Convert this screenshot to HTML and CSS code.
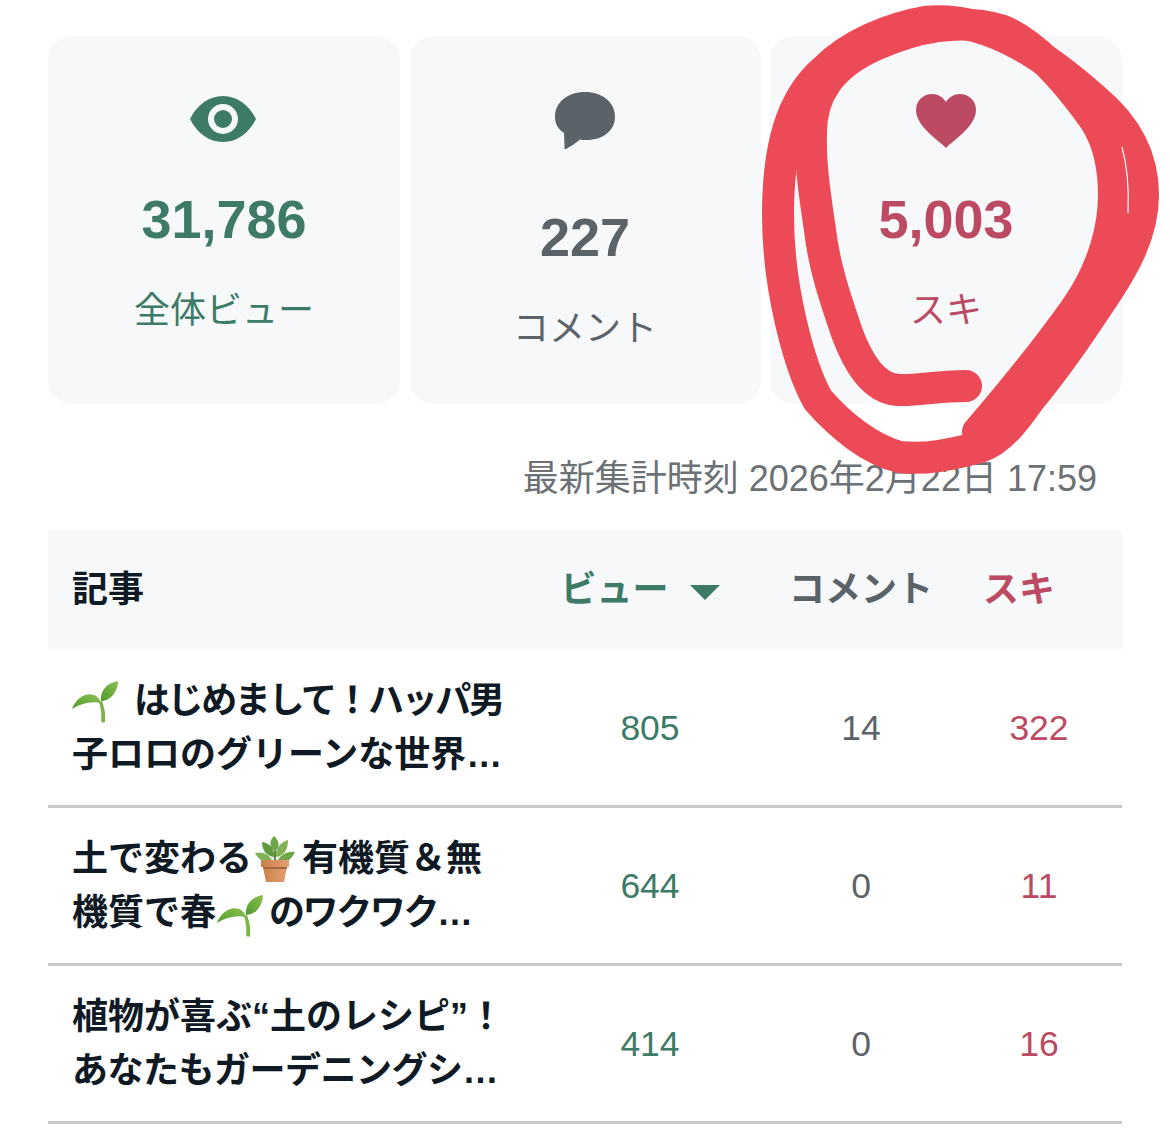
FILE: index.html
```html
<!DOCTYPE html>
<html lang="ja">
<head>
	<meta charset="utf-8">
	<title>ダッシュボード</title>
	<link rel="stylesheet" href="styles.css">
</head>

<body>
	<svg width="0" height="0" class="defs">
		<defs>
			<linearGradient id="leafGrad" x1="0" y1="1" x2="1" y2="0">
				<stop offset="0" stop-color="#4f9a2a"/>
				<stop offset="1" stop-color="#8cc152"/>
			</linearGradient>
			<linearGradient id="potGrad" x1="0" y1="0" x2="1" y2="0">
				<stop offset="0" stop-color="#c97f4c"/>
				<stop offset="1" stop-color="#e5a070"/>
			</linearGradient>
			<symbol id="seedling" viewBox="0 0 46 42">
				<path d="M33 41 C34 32 32 26 30 20 L27 21 C29 28 30 34 29 40 C30 42 32 42 33 41Z" fill="#7cb545"/>
				<path d="M0 28 C4 17 14 11 22 14 C25 15 28 18 29 22 C20 20 9 22 0 28Z" fill="url(#leafGrad)"/>
				<path d="M29 20 C28 9 35 2 46 0 C46 10 39 20 29 20Z" fill="url(#leafGrad)"/>
			</symbol>
			<symbol id="potted" viewBox="0 0 40 46">
				<path d="M20 27 L20 12" stroke="#5d8f3a" stroke-width="2" fill="none"/>
				<path d="M20 15 C14 11 14 5 19 0 C25 5 25 11 20 15Z" fill="#6fa44a"/>
				<path d="M19 21 C11 20 7 14 7 6 C15 7 20 13 19 21Z" fill="#5f9a40"/>
				<path d="M21 21 C29 20 33 14 33 4 C25 6 20 13 21 21Z" fill="#7fb356"/>
				<path d="M18 27 C11 28 4 25 0 17 C8 15 16 19 18 27Z" fill="#80b45a"/>
				<path d="M22 27 C29 28 36 25 40 16 C32 15 24 19 22 27Z" fill="#6ea548"/>
				<path d="M6 24 H34 V31 H32 L29 46 H11 L8 31 H6Z" fill="url(#potGrad)"/>
				<path d="M8 31 H32 V33 H8Z" fill="#a9683c"/>
			</symbol>
		</defs>
	</svg>

	<div class="stats">
		<div class="card card--view">
			<div class="card__icon">
				<svg class="eye" width="66" height="46" viewBox="0 0 66 46">
					<path fill="#3e7b67" fill-rule="evenodd" d="M0 23 C7 9 19 0 33 0 C47 0 59 9 66 23 C59 37 47 46 33 46 C19 46 7 37 0 23Z M33 8 A15 15 0 1 0 33 38 A15 15 0 1 0 33 8Z"/>
					<circle cx="33" cy="23" r="9" fill="#3e7b67"/>
				</svg>
			</div>
			<div class="card__num">31,786</div>
			<div class="card__label">全体ビュー</div>
		</div>
		<div class="card card--comment">
			<div class="card__icon">
				<svg width="60" height="58" viewBox="0 0 60 58">
					<path fill="#5c6368" d="M30 0 C47 0 60 10 60 25 C60 39 47 48 32 48 C29 48 27 48 25 47.500 C21 51 16 54 12 56.500 C10 58 9 57 9.500 55 L9 41 C3 37 0 32 0 25 C0 10 13 0 30 0Z"/>
				</svg>
			</div>
			<div class="card__num">227</div>
			<div class="card__label">コメント</div>
		</div>
		<div class="card card--like">
			<div class="card__icon">
				<svg width="60" height="54" viewBox="0 0 60 54">
					<path fill="#bb4a62" d="M30 54 C25 48 0 33 0 16 C0 6 8 0 16 0 C22 0 27 3 30 8 C33 3 38 0 44 0 C52 0 60 6 60 16 C60 33 35 48 30 54Z"/>
				</svg>
			</div>
			<div class="card__num">5,003</div>
			<div class="card__label">スキ</div>
		</div>
	</div>

	<div class="updated">最新集計時刻 2026年2月22日 17:59</div>

	<div class="table">
		<div class="row row--head">
			<div class="head__title">記事</div>
			<div class="cell head--view">ビュー<span class="arrow"></span></div>
			<div class="cell head--comment">コメント</div>
			<div class="cell head--like">スキ</div>
		</div>
		<div class="row">
			<div class="title">
				<span class="line"><svg class="emoji emoji--first"><use href="#seedling"/></svg><span class="tight">はじめまして！ハッパ男</span></span>
				<span class="line">子ロロのグリーンな世界…</span>
			</div>
			<div class="cell view">805</div>
			<div class="cell comment">14</div>
			<div class="cell like">322</div>
		</div>
		<div class="row">
			<div class="title">
				<span class="line">土で変わる<svg class="emoji emoji--pot"><use href="#potted"/></svg>有機質＆無</span>
				<span class="line">機質で春<svg class="emoji emoji--mid"><use href="#seedling"/></svg><span class="tight">のワクワク…</span></span>
			</div>
			<div class="cell view">644</div>
			<div class="cell comment">0</div>
			<div class="cell like">11</div>
		</div>
		<div class="row">
			<div class="title">
				<span class="line">植物が喜ぶ“土のレシピ”！</span>
				<span class="line slight">あなたもガーデニングシ…</span>
			</div>
			<div class="cell view">414</div>
			<div class="cell comment">0</div>
			<div class="cell like">16</div>
		</div>
	</div>

	<!-- hand drawn circle on top of the page -->
	<svg class="scribble" width="1170" height="1135" viewBox="0 0 1170 1135">
		<g fill="none" stroke="#ec4a56" stroke-width="32" stroke-linecap="round" stroke-linejoin="round">
			<path d="M966 386 C935 386 918 391 898 390 C872 388 857 360 847 333 C834 295 824 265 820 230 C814 190 810 160 811 135 C810 95 830 65 875 45 C915 27 960 18 1000 30 C1035 42 1070 85 1095 120 C1108 140 1114 165 1114 195 C1114 225 1105 268 1075 310 C1050 345 1010 395 978 432"/>
			<path d="M925 22 C990 15 1050 60 1095 100 C1125 125 1143 155 1143 195 C1143 235 1122 270 1098 305 C1075 340 1050 375 1029 400 C1015 420 1000 440 980 447 C950 455 925 460 900 457 C870 450 840 425 818 400 C800 368 778 290 778 215 C778 150 790 100 825 70 C850 45 890 28 925 22Z"/>
		</g>
		<path d="M1122 147 C1127 165 1129 190 1128 213" fill="none" stroke="#fff" stroke-width="1.200"/>
	</svg>
</body>

</html>
```
FILE: styles.css
```css
* {
	box-sizing: border-box;
}

body {
	margin: 0;
	padding: 36px 48px 0;
	height: 1135px;
	overflow: hidden;
	background-color: #fff;
	font-family: "Liberation Sans", "Noto Sans CJK JP", sans-serif;
	font-size: 36px;
	position: relative;
}

.defs {
	display: block;
	height: 0;
}

.stats {
	display: grid;
	grid-template-columns: 352px 351px 352px;
	gap: 9.500px;
}

.card {
	height: 368px;
	padding-top: 56px;
	background-color: #f6f8fa;
	border-radius: 24px;
	display: flex;
	flex-direction: column;
	align-items: center;
}

.card__icon {
	height: 58px;
	display: flex;
	align-items: center;
	justify-content: center;
}

.eye {
	margin: -4px 2px 0 0;
}

.card__num {
	margin-top: 38px;
	font-size: 54px;
	font-weight: bold;
	line-height: 62px;
}

.card__label {
	margin-top: 36px;
	line-height: 50px;
}

.card--comment .card__num {
	margin-top: 56px;
}

.card--view {
	color: #3e7b67;
}

.card--comment {
	color: #5c6368;
}

.card--like {
	color: #bb4a62;
}

.updated {
	margin-top: 50px;
	padding-right: 25px;
	height: 76px;
	line-height: 50px;
	text-align: right;
	color: #6b7175;
}

.row {
	display: grid;
	grid-template-columns: 497px 210px 212px 144px;
	align-items: center;
	height: 158px;
	border-bottom: 3px solid #c8c8c8;
	font-size: 35.500px;
}

.row--head {
	height: 120px;
	padding-bottom: 8px;
	background-color: #f6f8fa;
	border-bottom: none;
	font-size: 36px;
	font-weight: bold;
}

.head__title {
	padding-left: 24px;
	color: #0f1a24;
}

.cell {
	text-align: center;
}

.head--view {
	color: #3e7b67;
	padding-right: 20px;
}

.head--comment {
	color: #5c6368;
}

.head--like {
	color: #bb4a62;
	padding-right: 40px;
}

.arrow {
	display: inline-block;
	width: 0;
	height: 0;
	margin-left: 21px;
	vertical-align: 2px;
	border-left: 15px solid transparent;
	border-right: 15px solid transparent;
	border-top: 15px solid #3e7b67;
}

.title {
	padding-left: 24px;
	font-size: 36px;
	font-weight: bold;
	color: #0f1a24;
	white-space: nowrap;
}

.line {
	display: block;
	height: 54px;
	line-height: 54px;
}

.tight {
	letter-spacing: -2.400px;
}

.slight {
	letter-spacing: -0.500px;
}

.emoji {
	display: inline-block;
}

.emoji--first {
	width: 46px;
	height: 42px;
	margin-right: 16px;
	vertical-align: -10px;
}

.emoji--mid {
	width: 46px;
	height: 42px;
	vertical-align: -12px;
	margin: 0 6px 0 1px;
}

.emoji--pot {
	width: 40px;
	height: 46px;
	vertical-align: -11px;
	margin: 0 7px 0 3px;
}

.view {
	color: #3e7b67;
	padding-top: 2px;
}

.comment {
	color: #5c6368;
	padding-top: 2px;
}

.like {
	color: #bb4a62;
	padding-top: 2px;
}

.scribble {
	position: absolute;
	left: 0;
	top: 0;
}
```
